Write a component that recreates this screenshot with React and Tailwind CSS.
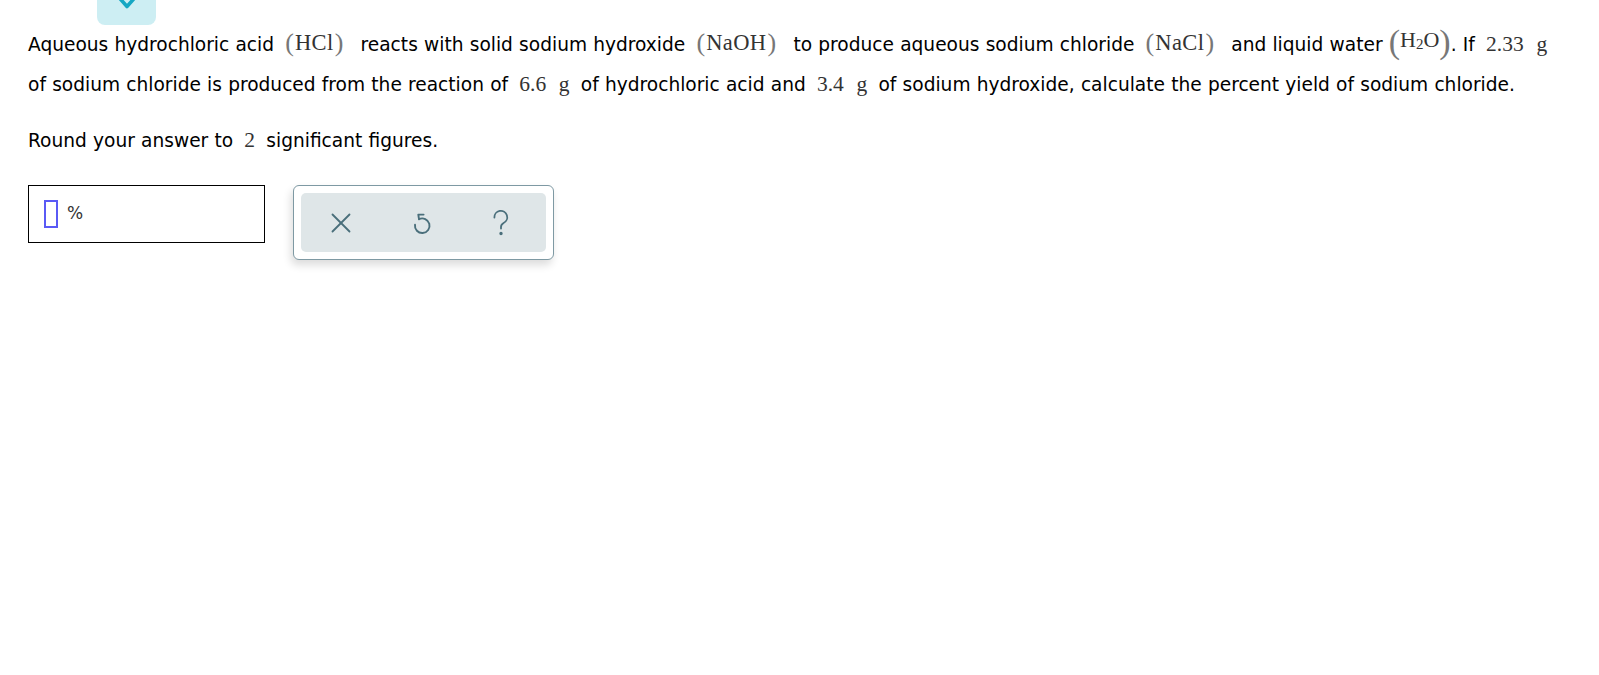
import { X } from 'lucide-react';

const M = ({ children }) => (
  <span className="mx-[5px] font-['Liberation_Serif',serif] text-[21.5px] leading-none text-[#333]">{children}</span>
);

const G = () => <span className="ml-[7px]">g</span>;

const Paren = ({ children }) => (
  <span className="ml-[5px] mr-[11px] inline-flex items-center font-['Liberation_Serif',serif] leading-none text-[#333]">
    <span className="text-[26px] text-[#777]">(</span>
    <span className="px-[1px] text-[22.5px] tracking-[0.4px]">{children}</span>
    <span className="text-[26px] text-[#777]">)</span>
  </span>
);

function Reset() {
  return (
    <svg width="20" height="26" viewBox="0 0 20 26" fill="none" stroke="#4a6f7b" strokeWidth="1.9" strokeLinecap="round" strokeLinejoin="round">
      <path d="M7 9.2 A7.3 7.3 0 1 1 3 14.8" />
      <path d="M7 9.2 L6.3 4.6 H11.6" />
    </svg>
  );
}

function Help() {
  return (
    <svg width="18" height="28" viewBox="0 0 18 28" fill="none" stroke="#4a6f7b" strokeWidth="1.8" strokeLinecap="round">
      <path d="M2.4 8.5 A6.4 6.4 0 1 1 11.6 14 C9.8 15 9 16 9 18 V19.5" />
      <circle cx="9" cy="24.5" r="0.8" fill="#4a6f7b" />
    </svg>
  );
}

export default function App() {
  return (
    <div className="min-h-screen bg-white pl-[28px] pr-4 font-['DejaVu_Sans',Verdana,sans-serif] text-[18.6px] text-black">
      <div className="ml-[69px] flex h-[25px] w-[59px] items-start justify-center overflow-hidden rounded-b-[8px] bg-[#cdeef3]">
        <svg width="22" height="14" viewBox="0 0 22 14" fill="none" stroke="#15a7c3" strokeWidth="3.6" strokeLinecap="round" strokeLinejoin="round">
          <path d="M3.5 -2 L11 6.5 L18.5 -2" />
        </svg>
      </div>

      <p className="-mt-[2px] leading-[40px] [word-spacing:0.3px]">
        Aqueous hydrochloric acid <Paren>HCl</Paren> reacts with solid sodium hydroxide <Paren>NaOH</Paren> to produce aqueous sodium chloride <Paren>NaCl</Paren> and liquid water{' '}
        <span className="inline-flex items-center font-['Liberation_Serif',serif] leading-none text-[#333]">
          <span className="relative top-[2px] text-[34px] font-light text-[#777]">(</span>
          <span className="text-[22px]">
            H<sub className="relative top-[2px] text-[15px] leading-none">2</sub>O
          </span>
          <span className="relative top-[2px] text-[34px] font-light text-[#777]">)</span>
        </span>
        . If <M>2.33 <G /></M>
        <br />
        of sodium chloride is produced from the reaction of <M>6.6 <G /></M> of hydrochloric acid and <M>3.4 <G /></M> of sodium hydroxide, calculate the percent yield of sodium chloride.
      </p>

      <p className="mt-[16px] leading-[40px] [word-spacing:0.3px]">
        Round your answer to <M>2</M> significant figures.
      </p>

      <div className="mt-[24px] flex items-start gap-[28px]">
        <div className="flex h-[58px] w-[237px] items-center gap-[9px] border border-black pl-[15px]">
          <div className="h-[28px] w-[14px] border-2 border-[#5a5af5]" />
          <span className="text-[17px] text-[#333]">%</span>
        </div>
        <div className="rounded-[6px] border border-[#7e99a3] bg-white p-[7px] shadow-[-2px_5px_8px_rgba(0,0,0,0.14)]">
          <div className="flex h-[59px] w-[245px] items-center rounded-[5px] bg-[#dfe6e8] pl-[23px]">
            <X className="h-[34px] w-[34px] text-[#4a6f7b]" strokeWidth={1.3} />
            <span className="ml-[54px] flex"><Reset /></span>
            <span className="ml-[60px] flex"><Help /></span>
          </div>
        </div>
      </div>
    </div>
  );
}
